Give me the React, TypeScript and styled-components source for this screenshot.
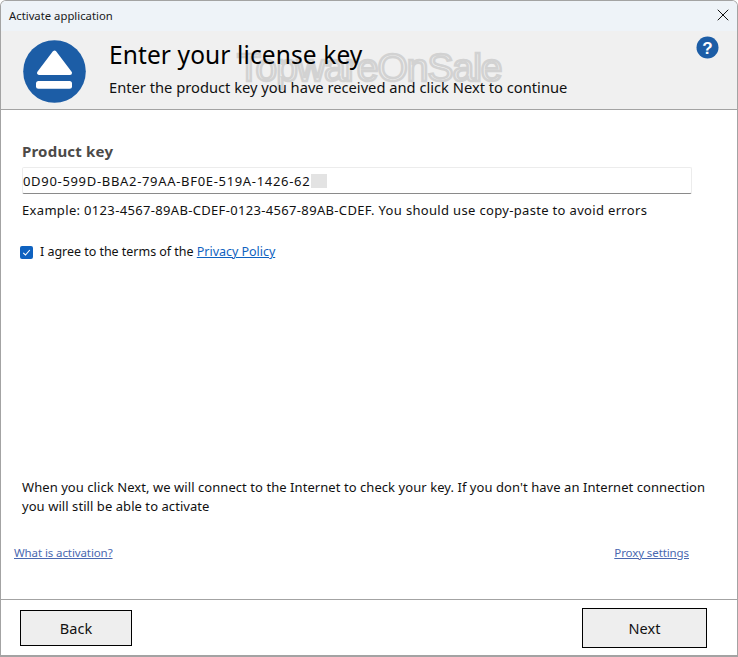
import React from "react";
import styled, { createGlobalStyle } from "styled-components";
import { X } from "lucide-react";

const GlobalStyle = createGlobalStyle`
  html, body {
    margin: 0;
    padding: 0;
    background: #ffffff;
  }
  * {
    box-sizing: border-box;
  }
`;

const StyledWindow = styled.div`
  width: 738px;
  height: 657px;
  display: flex;
  flex-direction: column;
  border: 1px solid #a3a3a3;
  border-bottom-width: 2px;
  border-radius: 6px 6px 0 0;
  background: #ffffff;
  color: #111111;
  font-family: "Noto Sans", "Open Sans", sans-serif;
  font-size: 13px;
  overflow: hidden;
`;

const StyledTitleBar = styled.div`
  height: 30px;
  flex: none;
  display: flex;
  align-items: center;
  justify-content: space-between;
  padding: 0 4px 2px 8px;
  background: #eef3f8;
  font-size: 11.3px;
  color: #1a1a1a;
`;

const StyledHeader = styled.div`
  position: relative;
  height: 79px;
  flex: none;
  display: flex;
  padding: 9px 21px 0 22px;
  background: #f0f0f0;
  border-bottom: 1px solid #a3a3a3;
`;

const StyledHeaderText = styled.div`
  position: relative;
  z-index: 1;
  margin: -1px 0 0 22px;
  display: flex;
  flex-direction: column;
`;

const StyledHeading = styled.div`
  font-size: 24.5px;
  line-height: 32px;
  color: #000000;
  letter-spacing: 0.11px;
`;

const StyledSubheading = styled.div`
  margin-top: 6px;
  font-size: 14.7px;
  line-height: 20px;
  color: #101010;
`;

const StyledWatermark = styled.div`
  position: absolute;
  left: 236px;
  top: 15px;
  font-family: "Liberation Sans", sans-serif;
  font-size: 39px;
  line-height: 44px;
  letter-spacing: -1px;
  color: transparent;
  -webkit-text-stroke: 2.5px #d2d2d2;
  white-space: nowrap;
  pointer-events: none;
`;

const StyledHelp = styled.svg`
  position: absolute;
  top: 5px;
  right: 18px;
`;

const StyledBody = styled.div`
  flex: 1;
  display: flex;
  flex-direction: column;
  padding: 31px 21px 0 21px;
`;

const StyledLabel = styled.div`
  font-size: 15px;
  line-height: 20px;
  font-weight: 700;
  color: #4c4a48;
  letter-spacing: 0.2px;
`;

const StyledKeyField = styled.div`
  margin-top: 6px;
  width: 670px;
  height: 27px;
  display: flex;
  align-items: center;
  padding-left: 0;
  border: 1px solid #ececec;
  border-bottom: 1px solid #8a8a8a;
  border-radius: 2px;
  letter-spacing: 0.68px;
`;

const StyledBlur = styled.span`
  width: 16px;
  height: 14px;
  margin-left: 1px;
  background: #e3e3e3;
`;

const StyledHint = styled.div`
  margin-top: 7px;
  line-height: 18px;
  letter-spacing: 0.33px;
`;

const StyledAgreeRow = styled.div`
  margin-top: 24px;
  margin-left: -2px;
  display: flex;
  align-items: center;
  gap: 7px;
  font-size: 12.5px;
  line-height: 18px;
  letter-spacing: -0.03px;
`;

const StyledCheckbox = styled.span`
  width: 13px;
  height: 13px;
  display: flex;
  align-items: center;
  justify-content: center;
  background: #0f62c0;
  border-radius: 2px;
`;

const StyledPolicyLink = styled.a`
  color: #0f62c0;
  text-decoration: underline;
`;

const StyledNotice = styled.div`
  margin-top: auto;
  width: 700px;
  line-height: 19px;
  letter-spacing: 0.06px;
`;

const StyledLinks = styled.div`
  margin: 29px 27px 0 -8px;
  height: 54px;
  display: flex;
  justify-content: space-between;
  font-size: 11.5px;
  line-height: 16px;
  letter-spacing: -0.1px;
`;

const StyledMutedLink = styled.a`
  color: #4a68b0;
  text-decoration: underline;
`;

const StyledFooter = styled.div`
  height: 56px;
  flex: none;
  display: flex;
  align-items: center;
  justify-content: space-between;
  padding: 0 30px 0 19px;
  border-top: 1px solid #a3a3a3;
`;

const StyledButton = styled.button<{ $width: number; $height: number }>`
  width: ${(p) => p.$width}px;
  height: ${(p) => p.$height}px;
  border: 1px solid #000000;
  border-radius: 0;
  background: #eeeeee;
  color: #111111;
  font-family: inherit;
  font-size: 14.5px;
  padding: 0;
`;

const App = () => {
  return (
    <>
      <GlobalStyle />
      <StyledWindow>
        <StyledTitleBar>
          Activate application
          <X size={20} strokeWidth={1.2} color="#111111" />
        </StyledTitleBar>
        <StyledHeader>
          <svg width="64" height="64" viewBox="0 0 64 64">
            <circle cx="31.5" cy="31.5" r="31.3" fill="#1c5da6" />
            <path
              d="M31.5 12.5 L16 33 H47 Z"
              fill="#ffffff"
              stroke="#ffffff"
              strokeWidth="4"
              strokeLinejoin="round"
            />
            <rect x="13" y="41" width="36" height="7.7" rx="2.5" fill="#ffffff" />
          </svg>
          <StyledHeaderText>
            <StyledHeading>Enter your license key</StyledHeading>
            <StyledSubheading>
              Enter the product key you have received and click Next to continue
            </StyledSubheading>
          </StyledHeaderText>
          <StyledWatermark>TopwareOnSale</StyledWatermark>
          <StyledHelp width="23" height="23" viewBox="0 0 23 23">
            <circle cx="11.5" cy="11.5" r="11" fill="#1c5da6" />
            <text
              x="11.5"
              y="17.5"
              textAnchor="middle"
              fontFamily="Liberation Sans, sans-serif"
              fontWeight="700"
              fontSize="17"
              fill="#ffffff"
            >
              ?
            </text>
          </StyledHelp>
        </StyledHeader>
        <StyledBody>
          <StyledLabel>Product key</StyledLabel>
          <StyledKeyField>
            0D90-599D-BBA2-79AA-BF0E-519A-1426-62
            <StyledBlur />
          </StyledKeyField>
          <StyledHint>
            Example: 0123-4567-89AB-CDEF-0123-4567-89AB-CDEF. You should use
            copy-paste to avoid errors
          </StyledHint>
          <StyledAgreeRow>
            <StyledCheckbox>
              <svg width="9" height="9" viewBox="0 0 9 9">
                <path d="M1.2 4.8 L3.5 7 L7.8 2" fill="none" stroke="#ffffff" strokeWidth="1.1" />
              </svg>
            </StyledCheckbox>
            <span>
              I agree to the terms of the <StyledPolicyLink>Privacy Policy</StyledPolicyLink>
            </span>
          </StyledAgreeRow>
          <StyledNotice>
            When you click Next, we will connect to the Internet to check your key. If you
            don't have an Internet connection you will still be able to activate
          </StyledNotice>
          <StyledLinks>
            <StyledMutedLink>What is activation?</StyledMutedLink>
            <StyledMutedLink>Proxy settings</StyledMutedLink>
          </StyledLinks>
        </StyledBody>
        <StyledFooter>
          <StyledButton $width={112} $height={36}>Back</StyledButton>
          <StyledButton $width={125} $height={40}>Next</StyledButton>
        </StyledFooter>
      </StyledWindow>
    </>
  );
};

export default App;
